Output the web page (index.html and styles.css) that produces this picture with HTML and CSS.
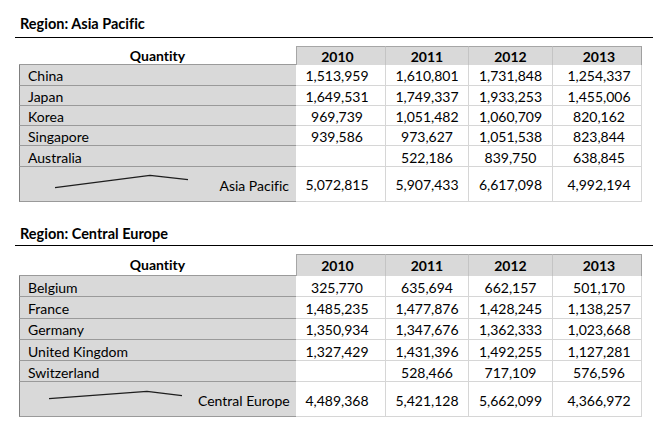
FILE: index.html
```html
<!DOCTYPE html>
<html lang="en">
<head>
<meta charset="utf-8">
<title>Quantity by Region</title>
<link rel="stylesheet" href="styles.css">
</head>
<body>
<div class="page">
  <section class="region">
    <h2 class="region-title">Region: Asia Pacific</h2>
    <div class="grid">
      <div class="cell head-label">Quantity</div>
      <div class="cell head-year y1 first">2010</div>
      <div class="cell head-year y2">2011</div>
      <div class="cell head-year y3">2012</div>
      <div class="cell head-year y4 last">2013</div>

      <div class="cell label top">China</div>
      <div class="cell num y1">1,513,959</div><div class="cell num y2">1,610,801</div><div class="cell num y3">1,731,848</div><div class="cell num y4">1,254,337</div>

      <div class="cell label">Japan</div>
      <div class="cell num y1">1,649,531</div><div class="cell num y2">1,749,337</div><div class="cell num y3">1,933,253</div><div class="cell num y4">1,455,006</div>

      <div class="cell label">Korea</div>
      <div class="cell num y1">969,739</div><div class="cell num y2">1,051,482</div><div class="cell num y3">1,060,709</div><div class="cell num y4">820,162</div>

      <div class="cell label">Singapore</div>
      <div class="cell num y1">939,586</div><div class="cell num y2">973,627</div><div class="cell num y3">1,051,538</div><div class="cell num y4">823,844</div>

      <div class="cell label">Australia</div>
      <div class="cell num y1"></div><div class="cell num y2">522,186</div><div class="cell num y3">839,750</div><div class="cell num y4">638,845</div>

      <div class="cell label total">
        <svg class="spark" width="170" height="34" viewBox="0 0 170 34"><polyline points="27,20.6 122,8.3 160,12.6" /></svg>
        <span class="total-name">Asia Pacific</span>
      </div>
      <div class="cell num sum y1">5,072,815</div><div class="cell num sum y2">5,907,433</div><div class="cell num sum y3">6,617,098</div><div class="cell num sum y4">4,992,194</div>
    </div>
  </section>

  <section class="region region--tall">
    <h2 class="region-title">Region: Central Europe</h2>
    <div class="grid">
      <div class="cell head-label">Quantity</div>
      <div class="cell head-year y1 first">2010</div>
      <div class="cell head-year y2">2011</div>
      <div class="cell head-year y3">2012</div>
      <div class="cell head-year y4 last">2013</div>

      <div class="cell label top">Belgium</div>
      <div class="cell num y1">325,770</div><div class="cell num y2">635,694</div><div class="cell num y3">662,157</div><div class="cell num y4">501,170</div>

      <div class="cell label">France</div>
      <div class="cell num y1">1,485,235</div><div class="cell num y2">1,477,876</div><div class="cell num y3">1,428,245</div><div class="cell num y4">1,138,257</div>

      <div class="cell label">Germany</div>
      <div class="cell num y1">1,350,934</div><div class="cell num y2">1,347,676</div><div class="cell num y3">1,362,333</div><div class="cell num y4">1,023,668</div>

      <div class="cell label">United Kingdom</div>
      <div class="cell num y1">1,327,429</div><div class="cell num y2">1,431,396</div><div class="cell num y3">1,492,255</div><div class="cell num y4">1,127,281</div>

      <div class="cell label">Switzerland</div>
      <div class="cell num y1"></div><div class="cell num y2">528,466</div><div class="cell num y3">717,109</div><div class="cell num y4">576,596</div>

      <div class="cell label total">
        <svg class="spark" width="170" height="34" viewBox="0 0 170 34"><polyline points="21,16.7 119,9.4 154,13.7" /></svg>
        <span class="total-name">Central Europe</span>
      </div>
      <div class="cell num sum y1">4,489,368</div><div class="cell num sum y2">5,421,128</div><div class="cell num sum y3">5,662,099</div><div class="cell num sum y4">4,366,972</div>
    </div>
  </section>
</div>
</body>
</html>
```

FILE: styles.css
```css
* { box-sizing: border-box; }

html, body {
  margin: 0;
  padding: 0;
  background: #ffffff;
}

body {
  font-family: Lato, "Open Sans", "Liberation Sans", sans-serif;
  font-size: 14px;
  font-variant-ligatures: none;
  color: #000000;
}

.page {
  width: 671px;
  padding: 15px 18px 0 15px;
}

.region {
  --row-h: 20.3px;
  --head-h: 19.3px;
  --title-gap: 5px;
  --grid-gap: 8px;
}

.region--tall {
  --row-h: 21.3px;
  --head-h: 21.7px;
  --title-gap: 3px;
  --grid-gap: 8.5px;
  margin-top: 23px;
}

.region-title {
  margin: 0;
  font-size: 14.5px;
  font-weight: 700;
  line-height: 17px;
  padding: 0 0 var(--title-gap) 5px;
  border-bottom: 1px solid #000000;
}

.grid {
  display: grid;
  grid-template-columns: 277px 90px 83px 84px 89px;
  grid-template-rows: var(--head-h) repeat(5, var(--row-h)) 35px;
  margin: var(--grid-gap) 0 0 4px;
}

.cell {
  display: flex;
  align-items: center;
  padding-top: 3px;
  line-height: 16px;
  white-space: nowrap;
}

.head-label {
  justify-content: center;
  font-weight: 700;
  border-bottom: 1px solid #9a9a9a;
  padding-top: 1px;
}

.head-year {
  justify-content: center;
  font-weight: 700;
  background: #d9d9d9;
  border-top: 1px solid #a6a6a6;
  border-right: 1px solid #c4c4c4;
  padding-top: 1px;
}

.head-year.first { border-left: 1px solid #a6a6a6; }
.head-year.last { border-right: 1px solid #a0a0a0; }

.label {
  background: #d9d9d9;
  border-left: 1px solid #7f7f7f;
  border-bottom: 1px solid #9a9a9a;
  padding-left: 8px;
}

.num {
  justify-content: center;
  border-right: 1px solid #d6d6d6;
  border-bottom: 1px solid #d6d6d6;
}

.num.y1 { padding-right: 7px; }
.num.y4 { padding-left: 4px; }
.head-year.y1 { padding-right: 7px; }
.head-year.y4 { padding-left: 4px; }

.total {
  justify-content: space-between;
  padding-top: 0;
  padding-right: 7px;
}

.total-name { padding-top: 4px; }

.spark { display: block; flex: none; }

.spark polyline {
  fill: none;
  stroke: #1e1e1e;
  stroke-width: 1.3;
  stroke-linejoin: round;
}
```
